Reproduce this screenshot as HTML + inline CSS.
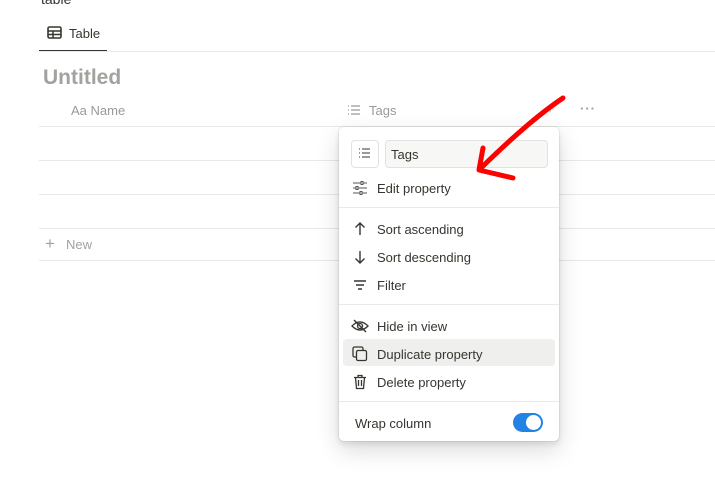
<!DOCTYPE html>
<html><head><style>
body{margin:0;width:715px;height:489px;overflow:hidden;background:#fff;font-family:"Liberation Sans",sans-serif;position:relative;color:#37352f}
.a{position:absolute}
.hl{position:absolute;left:39px;right:0;height:1px;background:#e9e9e7}
.mi{position:absolute;left:377px;font-size:13px;color:#37352f}
.ic{position:absolute;left:352px;width:16px;height:16px}
.dv{position:absolute;left:339px;width:220px;height:1px;background:#e9e9e7}
</style></head><body>
<div class="a" style="left:41px;top:-9px;font-size:14px;color:#37352f">table</div>
<svg class="a" style="left:47px;top:26px" width="15" height="13" viewBox="0 0 15 13"><rect x="1" y="1" width="13" height="11" rx="1.5" fill="none" stroke="#37352f" stroke-width="1.6"/><path d="M1 5h13M1 8.5h13M6 5v7" stroke="#37352f" stroke-width="1.5"/></svg>
<div class="a" style="left:69px;top:26px;font-size:13px">Table</div>
<div class="a" style="left:39px;top:50px;width:68px;height:2px;background:#37352f"></div>
<div class="hl" style="top:51px"></div>
<div class="a" style="left:43px;top:66px;font-size:21px;font-weight:bold;color:#a3a29e">Untitled</div>
<div class="a" style="left:71px;top:103px;font-size:13px;color:#9b9a97">Aa Name</div>
<svg class="a" style="left:347px;top:104px" width="14" height="12"><path d="M1 2h1M1 6h1M1 10h1M4 2h9M4 6h9M4 10h9" stroke="#9b9a97" stroke-width="1.2"/></svg>
<div class="a" style="left:369px;top:103px;font-size:13px;color:#9b9a97">Tags</div>
<div class="a" style="left:546px;top:101px;font-size:15px;color:#c8c7c4">+</div>
<div class="a" style="left:580px;top:101px;font-size:13px;color:#9b9a97;letter-spacing:1px;font-weight:bold">···</div>
<div class="hl" style="top:126px"></div>
<div class="hl" style="top:160px"></div>
<div class="hl" style="top:194px"></div>
<div class="hl" style="top:228px"></div>
<div class="hl" style="top:260px"></div>
<div class="a" style="left:45px;top:234px;font-size:17px;color:#a3a29e">+</div>
<div class="a" style="left:66px;top:237px;font-size:13px;color:#a3a29e">New</div>

<div class="a" style="left:339px;top:127px;width:220px;height:314px;background:#fff;border-radius:5px;box-shadow:0 0 0 1px rgba(15,15,15,.05),0 3px 6px rgba(15,15,15,.1),0 9px 24px rgba(15,15,15,.15)"></div>
<div class="a" style="left:351px;top:140px;width:26px;height:26px;border:1px solid #e3e2e0;border-radius:4px"></div>
<svg class="a" style="left:358px;top:147px" width="14" height="12"><path d="M1 2h1M1 6h1M1 10h1M4 2h8M4 6h8M4 10h8" stroke="#37352f" stroke-width="1.1"/></svg>
<div class="a" style="left:385px;top:140px;width:161px;height:26px;border:1px solid #e3e2e0;border-radius:4px;background:#f7f7f5"></div>
<div class="a" style="left:391px;top:147px;font-size:13px">Tags</div>
<svg class="ic" style="top:180px" viewBox="0 0 16 16"><path d="M1 3h14M1 8h14M1 13h14" stroke="#555" stroke-width="1.1"/><rect x="9" y="1.5" width="2" height="3" fill="#fff" stroke="#555"/><rect x="4" y="6.5" width="2" height="3" fill="#fff" stroke="#555"/><rect x="8" y="11.5" width="2" height="3" fill="#fff" stroke="#555"/></svg>
<div class="mi" style="top:181px">Edit property</div>
<div class="dv" style="top:207px"></div>
<svg class="ic" style="top:221px" viewBox="0 0 16 16"><path d="M8 14V2M3.5 6.5L8 2l4.5 4.5" fill="none" stroke="#37352f" stroke-width="1.4"/></svg>
<div class="mi" style="top:222px">Sort ascending</div>
<svg class="ic" style="top:249px" viewBox="0 0 16 16"><path d="M8 2v12M3.5 9.5L8 14l4.5-4.5" fill="none" stroke="#37352f" stroke-width="1.4"/></svg>
<div class="mi" style="top:250px">Sort descending</div>
<svg class="ic" style="top:277px" viewBox="0 0 16 16"><path d="M2 4h12M4 8h8M6 12h4" stroke="#37352f" stroke-width="1.4"/></svg>
<div class="mi" style="top:278px">Filter</div>
<div class="dv" style="top:304px"></div>
<svg class="ic" style="top:318px;left:351px;width:18px" viewBox="0 0 18 16"><path d="M1 8Q9 0 17 8Q9 16 1 8Z" fill="none" stroke="#37352f" stroke-width="1.3"/><circle cx="9" cy="8" r="2.5" fill="none" stroke="#37352f" stroke-width="1.3"/><path d="M3 2l12 12" stroke="#37352f" stroke-width="1.4"/></svg>
<div class="mi" style="top:319px">Hide in view</div>
<div class="a" style="left:343px;top:339px;width:212px;height:27px;background:#efefee;border-radius:4px"></div>
<svg class="ic" style="top:346px" viewBox="0 0 16 16"><rect x="1" y="1" width="10" height="10" rx="1.5" fill="none" stroke="#37352f" stroke-width="1.3"/><rect x="4.5" y="4.5" width="10" height="10" rx="1.5" fill="#efefee" stroke="#37352f" stroke-width="1.3"/></svg>
<div class="mi" style="top:347px">Duplicate property</div>
<svg class="ic" style="top:374px" viewBox="0 0 16 16"><path d="M2 3.5h12M6 3.5V1.5h4v2M3.5 3.5l1 11h7l1-11M6.5 6v6M9.5 6v6" fill="none" stroke="#37352f" stroke-width="1.3"/></svg>
<div class="mi" style="top:375px">Delete property</div>
<div class="dv" style="top:401px"></div>
<div class="a" style="left:355px;top:416px;font-size:13px">Wrap column</div>
<div class="a" style="left:513px;top:413px;width:30px;height:19px;border-radius:10px;background:#2383e2"></div>
<div class="a" style="left:526px;top:415px;width:15px;height:15px;border-radius:50%;background:#fff"></div>

<svg class="a" style="left:0;top:0" width="715" height="489"><path d="M563 98Q530 120 481 168M483 148L479 170L513 178" fill="none" stroke="#f00" stroke-width="5" stroke-linecap="round" stroke-linejoin="round"/></svg>
</body></html>
